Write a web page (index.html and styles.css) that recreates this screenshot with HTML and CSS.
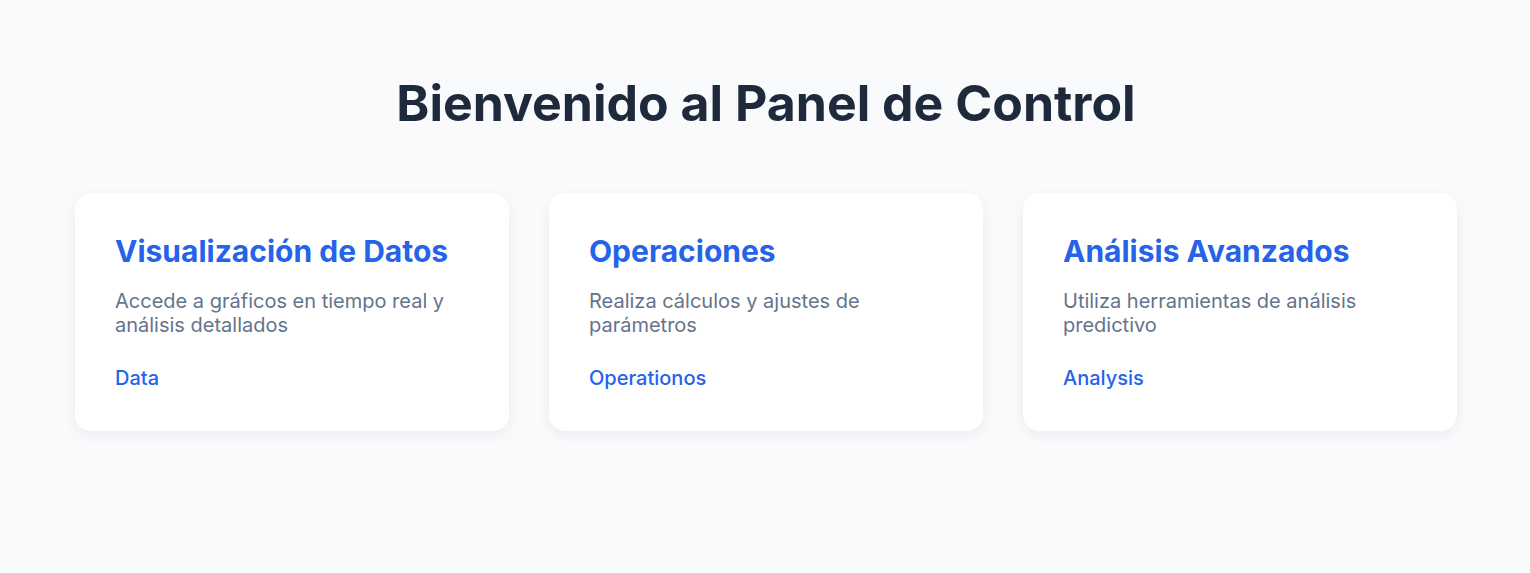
FILE: index.html
```html
<!DOCTYPE html>
<html lang="es">
<head>
<meta charset="utf-8">
<title>Panel de Control</title>
<link rel="stylesheet" href="styles.css">
</head>
<body>
<main class="page">
  <h1 class="title">Bienvenido al Panel de Control</h1>
  <div class="cards">
    <section class="card">
      <h2 class="card-title">Visualización de Datos</h2>
      <p class="card-text">Accede a gráficos en tiempo real y análisis detallados</p>
      <a class="card-link" href="#">Data</a>
    </section>
    <section class="card">
      <h2 class="card-title">Operaciones</h2>
      <p class="card-text">Realiza cálculos y ajustes de parámetros</p>
      <a class="card-link" href="#">Operationos</a>
    </section>
    <section class="card">
      <h2 class="card-title">Análisis Avanzados</h2>
      <p class="card-text">Utiliza herramientas de análisis predictivo</p>
      <a class="card-link" href="#">Analysis</a>
    </section>
  </div>
</main>
</body>
</html>
```
FILE: styles.css
```css
* { box-sizing: border-box; }
html, body { margin: 0; padding: 0; }
body {
  background: #f8fafc;
  font-family: Inter, "Noto Sans", sans-serif;
  height: 573px;
}
.page {
  padding: 73px 73px 0 75px;
}
.title {
  margin: 0 0 60px;
  text-align: center;
  font-size: 50px;
  line-height: 60px;
  font-weight: 700;
  color: #1e293b;
}
.cards {
  display: grid;
  grid-template-columns: repeat(3, 1fr);
  gap: 40px;
}
.card {
  background: #ffffff;
  border-radius: 16px;
  padding: 40px;
  box-shadow: 0 4px 14px rgba(15, 23, 42, 0.06);
  display: flex;
  flex-direction: column;
  align-items: flex-start;
}
.card-title {
  margin: 0 0 20px;
  font-size: 30px;
  line-height: 36px;
  font-weight: 700;
  color: #2563eb;
}
.card-text {
  margin: 0 0 29px;
  font-size: 20px;
  line-height: 24px;
  color: #64748b;
}
.card-link {
  font-size: 20px;
  line-height: 25px;
  font-weight: 500;
  color: #2563eb;
  text-decoration: none;
}
```
